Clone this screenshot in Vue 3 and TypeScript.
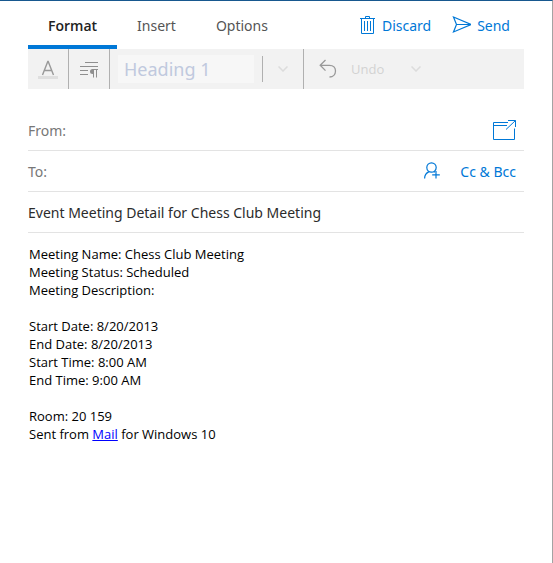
<script setup lang="ts">
import { ref } from 'vue'

const tabs: string[] = ['Format', 'Insert', 'Options']
const activeTab = ref('Format')
const style = ref('Heading 1')
const sender = ref('')
const recipients = ref('')
const subject = ref('Event Meeting Detail for Chess Club Meeting')
const details: string[] = [
  'Meeting Name: Chess Club Meeting',
  'Meeting Status: Scheduled',
  'Meeting Description:',
  '',
  'Start Date: 8/20/2013',
  'End Date: 8/20/2013',
  'Start Time: 8:00 AM',
  'End Time: 9:00 AM',
  '',
  'Room: 20 159',
]
</script>

<template>
  <main class="compose">
    <header class="commands">
      <nav class="tabs">
        <button
          v-for="tab in tabs"
          :key="tab"
          type="button"
          class="tab"
          :class="{ active: tab === activeTab }"
          @click="activeTab = tab"
        >
          {{ tab }}
        </button>
      </nav>
      <div class="actions">
        <button type="button" class="action">
          <svg width="16" height="20" viewBox="0 0 16 20" fill="none" stroke="currentColor">
            <path d="M0 3.5H15M5.5 3V1.5H9.5V3M1.5 4V18.5H13.5V4M4.5 6V16M7.5 6V16M10.5 6V16" />
          </svg>
          Discard
        </button>
        <button type="button" class="action">
          <svg width="20" height="20" viewBox="0 0 20 20" fill="none" stroke="currentColor" stroke-width="1.2">
            <path d="M2.5 2L20 9.5L2.5 17L5.5 9.5ZM5.5 9.5H19" />
          </svg>
          Send
        </button>
      </div>
    </header>

    <div class="toolbar">
      <button type="button" class="tool" aria-label="Font formatting" disabled>
        <svg width="20" height="20" viewBox="0 0 20 20" fill="none">
          <path d="M0 18.5H20" stroke="#dfdfdf" stroke-width="3" />
          <path d="M4.5 16L9.8 2.5H10.2L15.5 16M6.3 11.5H13.7" stroke="#999" stroke-width="1.4" />
        </svg>
      </button>
      <button type="button" class="tool" aria-label="Paragraph formatting" disabled>
        <svg width="20" height="20" viewBox="0 0 20 20" fill="none" stroke="#8f8f8f">
          <path d="M6 3.5H19M1 7.5H19M1 11.5H9M1 15.5H9" />
          <path d="M14.5 10V18.5M17.5 10V18.5M13 10.5H19" />
          <path d="M14.5 10H13.5A2.4 2.4 0 0 0 13.5 15H14.5Z" fill="#8f8f8f" stroke="none" />
        </svg>
      </button>
      <div class="heading-tool">
        <select v-model="style" class="heading" aria-label="Paragraph style" disabled>
          <option>Heading 1</option>
        </select>
        <span class="rule"></span>
        <button type="button" class="more" aria-label="More styles" disabled>
          <svg width="10" height="6" viewBox="0 0 10 6" fill="none" stroke="#dcdcdc" stroke-width="1.5">
            <path d="M0.5 0.5L5 5L9.5 0.5" />
          </svg>
        </button>
      </div>
      <button type="button" class="undo" disabled>
        <svg width="18" height="20" viewBox="0 0 18 20" fill="none" stroke="#999" stroke-width="1.3">
          <path d="M6.5 1L1.2 6.3L6.5 11.6M1.2 6.3H10.5C14.5 6.3 16.5 9 16.5 12C16.5 15.5 14 18 10.5 18" />
        </svg>
        Undo
      </button>
      <button type="button" class="more" aria-label="More history" disabled>
        <svg width="10" height="6" viewBox="0 0 10 6" fill="none" stroke="#dcdcdc" stroke-width="1.5">
          <path d="M0.5 0.5L5 5L9.5 0.5" />
        </svg>
      </button>
    </div>

    <form class="fields" @submit.prevent>
      <div class="field">
        <label for="sender">From:</label>
        <input id="sender" v-model="sender" type="text" />
        <button type="button" class="link" aria-label="Open in new window">
          <svg width="24" height="22" viewBox="0 0 24 22" fill="none" stroke="currentColor">
            <path d="M16 3.5H1.5V20.5H22.5V9.5M1.5 6.5H15M14 10.5L23.5 1.5M16 1.5H23.5V8" />
          </svg>
        </button>
      </div>
      <div class="field">
        <label for="recipients">To:</label>
        <input id="recipients" v-model="recipients" type="text" />
        <button type="button" class="link" aria-label="Add contact">
          <svg width="16" height="18" viewBox="0 0 16 18" fill="none" stroke="currentColor" stroke-width="1.2">
            <circle cx="7.5" cy="5.5" r="4.7" />
            <path d="M0.6 16.5C0.6 13 2.5 10.8 5 9.6M10 9.6L11 10.3M12 9V16.5M8.2 12.8H15.8" />
          </svg>
        </button>
        <button type="button" class="link">Cc &amp; Bcc</button>
      </div>
      <div class="field">
        <input v-model="subject" class="subject" type="text" aria-label="Subject" />
      </div>
    </form>

    <article class="message">
      <p v-for="(line, index) in details" :key="index">{{ line }}</p>
      <p>Sent from <a href="#mail">Mail</a> for Windows 10</p>
    </article>
  </main>
</template>

<style>
body {
  background: #fff;
}
</style>

<style scoped>
.compose {
  box-sizing: border-box;
  min-height: 100vh;
  padding: 0 28px;
  border-top: 1px solid #17588f;
  border-right: 1px solid #a3a3a3;
  font-family: "Noto Sans", "Open Sans", sans-serif;
  font-size: 14px;
  color: #2b2b2b;
}

button,
input,
select {
  margin: 0;
  padding: 0;
  border: 0;
  border-radius: 0;
  background: none;
  font: inherit;
  color: inherit;
}

svg {
  display: block;
  flex: none;
}

.commands,
.tabs,
.actions,
.action,
.toolbar,
.heading-tool,
.undo,
.field {
  display: flex;
  align-items: center;
}

.commands {
  justify-content: space-between;
  height: 48px;
}

.tabs {
  align-self: stretch;
  align-items: stretch;
}

.tab {
  padding: 4px 20px 0;
  border-bottom: 4px solid transparent;
  color: #555;
}

.tab.active {
  border-color: #0078d7;
  font-family: "Open Sans", "Noto Sans", sans-serif;
  font-weight: 600;
  color: #222;
}

.actions {
  gap: 20px;
  padding-right: 14px;
}

.action {
  gap: 6px;
  color: #0078d7;
}

.toolbar {
  height: 40px;
  background: #f2f2f2;
}

.tool {
  display: grid;
  place-items: center;
  width: 41px;
  height: 40px;
  border-right: 1px solid #b0b0b0;
}

.heading-tool {
  height: 40px;
  padding-left: 8px;
  border-right: 1px solid #b0b0b0;
}

.heading {
  appearance: none;
  width: 136px;
  height: 28px;
  padding-left: 6px;
  background: #f7f7f7;
  font-size: 18px;
  color: #c0c9de;
  opacity: 1;
}

.rule {
  width: 1px;
  height: 26px;
  margin-left: 8px;
  background: #b0b0b0;
}

.more {
  display: grid;
  place-items: center;
  width: 40px;
  height: 40px;
}

.undo {
  gap: 14px;
  width: 92px;
  padding-left: 15px;
  font-family: "Open Sans", "Noto Sans", sans-serif;
  font-size: 13px;
  color: #d2d2d2;
}

.fields {
  padding-top: 21px;
}

.field {
  gap: 20px;
  height: 40px;
  padding-right: 8px;
  border-bottom: 1px solid #e3e3e3;
}

.field label {
  color: #777;
}

.field input {
  flex: 1;
  min-width: 0;
  height: 32px;
  outline: 0;
}

.link {
  color: #0078d7;
}

.message {
  padding: 12px 0 0 1px;
  font-family: "Open Sans", "Noto Sans", sans-serif;
  font-size: 13px;
  line-height: 18px;
  color: #000;
}

.message p {
  min-height: 18px;
  margin: 0;
}

.message a {
  color: #00f;
}
</style>
